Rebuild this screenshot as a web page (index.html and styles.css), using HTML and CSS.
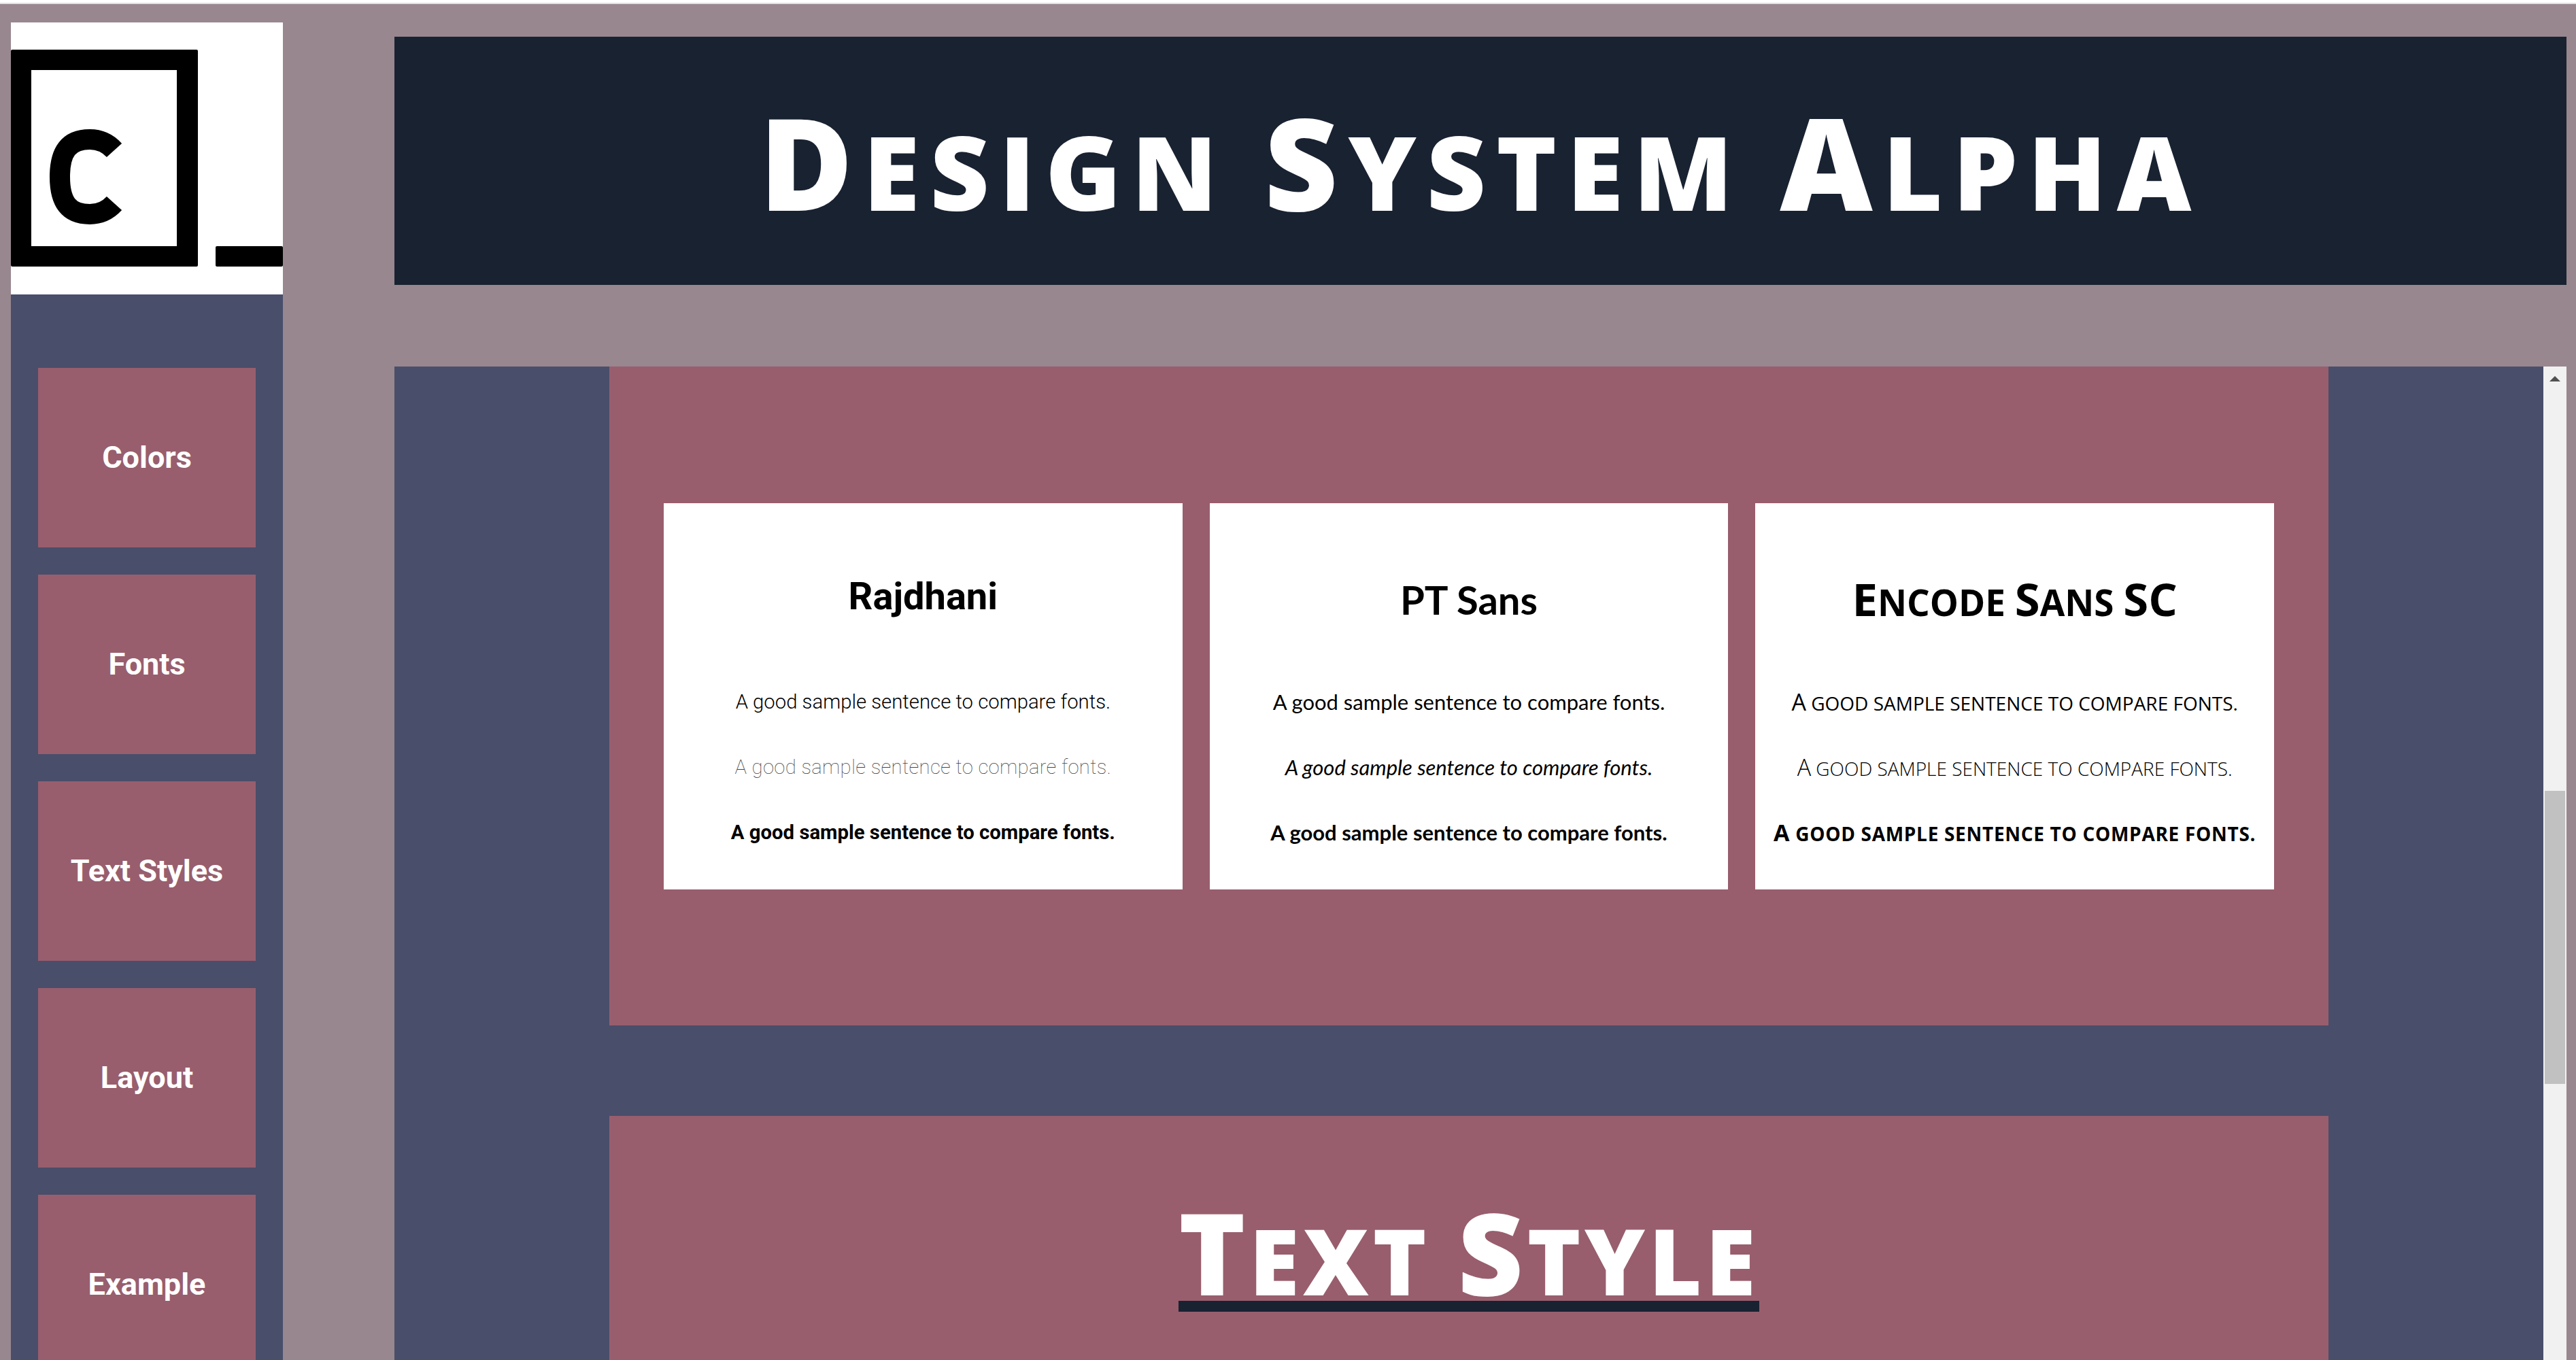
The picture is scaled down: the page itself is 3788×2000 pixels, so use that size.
FILE: index.html
```html
<!DOCTYPE html>
<html>
  <head>
    <meta charset="utf-8" />
    <title>Design System Alpha</title>
    <link rel="stylesheet" href="styles.css">
  </head>

  <body>
    <div class="page">
      <aside class="sidebar">
        <div class="logo">
          <svg width="400" height="400" viewBox="0 0 400 400">
            <path fill="#000" fill-rule="evenodd" d="M2 40H273a2 2 0 0 1 2 2V357a2 2 0 0 1-2 2H2a2 2 0 0 1-2-2V42a2 2 0 0 1 2-2ZM30 70V329H244V70Z" />
            <rect x="301" y="329" width="99" height="30" rx="2" fill="#000" />
            <path fill="none" stroke="#000" stroke-width="30" d="M152 188C142 177 131 172 116 172C85 172 72 190 72 227C72 264 85 282 116 282C131 282 142 277 152 266" />
          </svg>
        </div>
        <nav class="nav">
          <a class="nav-item">Colors</a>
          <a class="nav-item">Fonts</a>
          <a class="nav-item">Text Styles</a>
          <a class="nav-item">Layout</a>
          <a class="nav-item">Example</a>
        </nav>
      </aside>

      <div class="content">
        <header class="banner">
          <h1><span class="cap">D</span>esign <span class="cap">S</span>ystem <span class="cap">A</span>lpha</h1>
        </header>

        <div class="main">
          <main class="scroll-area">
            <section class="section fonts-section">
              <div class="font-card rajdhani">
                <h3>Rajdhani</h3>
                <p class="light">A good sample sentence to compare fonts.</p>
                <p class="thin">A good sample sentence to compare fonts.</p>
                <p class="bold">A good sample sentence to compare fonts.</p>
              </div>
              <div class="font-card ptsans">
                <h3>PT Sans</h3>
                <p>A good sample sentence to compare fonts.</p>
                <p class="italic">A good sample sentence to compare fonts.</p>
                <p class="bold">A good sample sentence to compare fonts.</p>
              </div>
              <div class="font-card encode">
                <h3><span class="cap">E</span>ncode <span class="cap">S</span>ans <span class="cap">SC</span></h3>
                <p><span class="cap">A</span> good sample sentence to compare fonts.</p>
                <p class="light"><span class="cap">A</span> good sample sentence to compare fonts.</p>
                <p class="bold"><span class="cap">A</span> good sample sentence to compare fonts.</p>
              </div>
            </section>

            <section class="section text-section">
              <h2><span class="cap">T</span>ext <span class="cap">S</span>tyle</h2>
            </section>
          </main>

          <div class="scrollbar">
            <div class="arrow"></div>
            <div class="thumb"></div>
          </div>
        </div>
      </div>
    </div>
  </body>
</html>
```

FILE: styles.css
```css
* {
  margin: 0;
  padding: 0;
  box-sizing: border-box;
}

html,
body {
  height: 2000px;
  overflow: hidden;
}

body {
  background-color: #98878f;
  border-top: 4px solid #ffffff;
  font-family: "Roboto", sans-serif;
}

.page {
  display: flex;
  height: 1996px;
  border-top: 2px solid #e0e0e6;
  padding-left: 16px;
}

.sidebar {
  width: 400px;
  margin-top: 27px;
  background-color: #494e6b;
  flex-shrink: 0;
}

.logo {
  height: 400px;
  background-color: #ffffff;
}

.logo svg {
  display: block;
}

.nav {
  display: flex;
  flex-direction: column;
  gap: 40px;
  padding: 108px 40px 0;
}

.nav-item {
  display: flex;
  align-items: center;
  justify-content: center;
  flex-shrink: 0;
  height: 264px;
  padding-bottom: 2px;
  background-color: #985e6d;
  color: #ffffff;
  font-size: 45px;
  font-weight: 700;
}

.content {
  width: 3194px;
  margin-left: 164px;
  padding-top: 48px;
}

.banner {
  display: flex;
  align-items: center;
  justify-content: center;
  height: 365px;
  background-color: #192231;
}

.banner h1 {
  color: #ffffff;
  font-family: "Open Sans", sans-serif;
  font-size: 151px;
  font-weight: 800;
  letter-spacing: 15px;
  text-transform: uppercase;
}

.banner .cap {
  font-size: 188px;
}

.main {
  display: flex;
  height: 1600px;
  margin-top: 120px;
  background-color: #494e6b;
}

.scroll-area {
  flex: 1;
  padding: 0 316px;
  overflow: hidden;
}

.section {
  background-color: #985e6d;
}

.fonts-section {
  display: grid;
  grid-template-columns: repeat(3, 1fr);
  gap: 40px;
  align-items: start;
  height: 969px;
  padding: 201px 80px 0;
}

.font-card {
  height: 568px;
  background-color: #ffffff;
  color: #000000;
  text-align: center;
}

.font-card h3 {
  font-size: 60px;
  line-height: 70px;
}

.font-card p {
  line-height: 40px;
  margin-top: 56px;
}

.rajdhani h3 {
  padding-top: 102px;
  font-size: 56px;
  font-weight: 700;
}

.rajdhani h3 + p {
  margin-top: 100px;
}

.rajdhani p {
  font-size: 29.3px;
}

.rajdhani .light {
  font-weight: 300;
}

.rajdhani .thin {
  font-weight: 100;
  letter-spacing: 0.3px;
  color: #444444;
}

.ptsans h3,
.ptsans p {
  font-family: "Lato", sans-serif;
}

.ptsans h3 {
  padding-top: 107px;
  font-size: 58px;
}

.ptsans h3 + p {
  margin-top: 95px;
}

.ptsans p {
  font-size: 31px;
}

.italic {
  font-style: italic;
}

.font-card .bold {
  font-weight: 700;
}

.encode h3,
.encode p {
  font-family: "Open Sans", sans-serif;
  text-transform: uppercase;
}

.encode .cap {
  line-height: 1;
}

.encode h3 {
  padding-top: 107px;
  font-size: 53px;
}

.encode h3 .cap {
  font-size: 67px;
}

.encode h3 + p {
  margin-top: 93px;
}

.encode p {
  font-size: 28px;
}

.encode p .cap {
  font-size: 34px;
}

.encode .light {
  font-weight: 300;
}

.encode .bold {
  letter-spacing: 0.7px;
}

.text-section {
  height: 1000px;
  margin-top: 133px;
  padding-top: 140px;
  text-align: center;
}

.text-section h2 {
  display: inline-block;
  border-bottom: 16px solid #192231;
  color: #ffffff;
  font-family: "Open Sans", sans-serif;
  font-size: 134px;
  font-weight: 800;
  letter-spacing: 5.5px;
  line-height: 120px;
  text-transform: uppercase;
}

.text-section .cap {
  font-size: 167px;
}

.scrollbar {
  width: 34px;
  flex-shrink: 0;
  background-color: #f1f1f1;
  padding-top: 14px;
}

.arrow {
  width: 0;
  height: 0;
  margin: 0 auto;
  border-left: 8px solid transparent;
  border-right: 8px solid transparent;
  border-bottom: 8px solid #505050;
}

.thumb {
  width: 30px;
  height: 431px;
  margin: 602px auto 0;
  background-color: #c1c1c1;
}
```
